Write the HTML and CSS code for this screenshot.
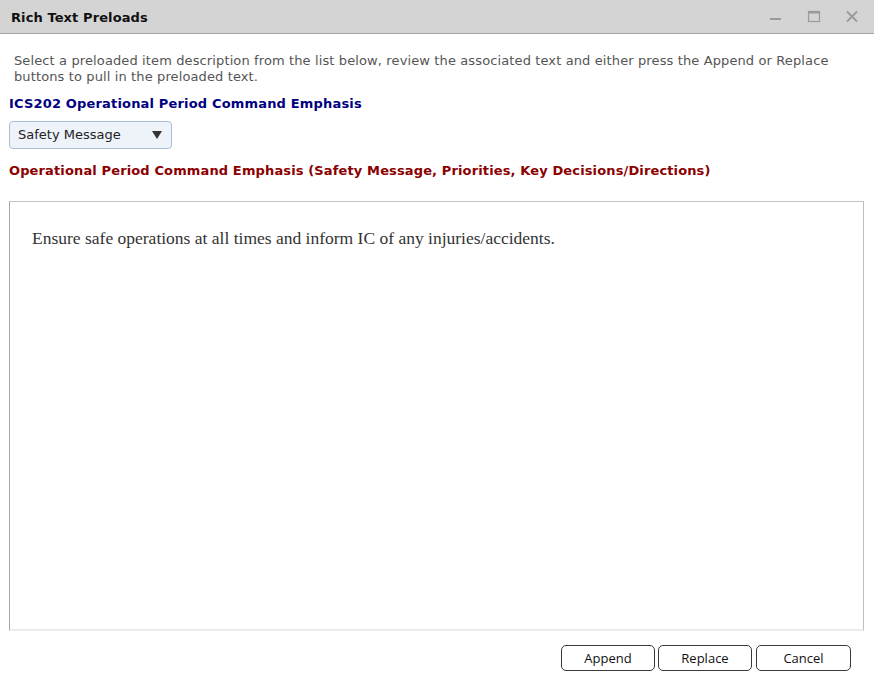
FILE: index.html
```html
<!DOCTYPE html>
<html>
<head>
<meta charset="utf-8">
<link rel="stylesheet" href="styles.css">
</head>
<body>
<div class="dialog">
  <div class="titlebar">
    <div class="title">Rich Text Preloads</div>
    <div class="controls">
      <svg class="ctl" width="14" height="14" viewBox="0 0 14 14"><rect x="1" y="8" width="11" height="2" fill="#9a9a9a"/></svg>
      <svg class="ctl" width="14" height="14" viewBox="0 0 14 14"><rect x="1.5" y="1.5" width="11" height="10" fill="none" stroke="#9a9a9a" stroke-width="1.2"/><rect x="1" y="1" width="12" height="2.5" fill="#9a9a9a"/></svg>
      <svg class="ctl" width="14" height="14" viewBox="0 0 14 14"><path d="M2 1.5 L12 11.5 M12 1.5 L2 11.5" stroke="#9a9a9a" stroke-width="1.9"/></svg>
    </div>
  </div>
  <div class="content">
    <p class="intro">Select a preloaded item description from the list below, review the associated text and either press the Append or Replace buttons to pull in the preloaded text.</p>
    <div class="section-title">ICS202 Operational Period Command Emphasis</div>
    <div class="select">
      <span>Safety Message</span>
      <svg width="10" height="8" viewBox="0 0 10 8"><path d="M0 0 L10 0 L5 8 Z" fill="#333"/></svg>
    </div>
    <div class="field-title">Operational Period Command Emphasis (Safety Message, Priorities, Key Decisions/Directions)</div>
    <div class="editor">
      <p>Ensure safe operations at all times and inform IC of any injuries/accidents.</p>
    </div>
  </div>
  <div class="footer">
    <button class="btn">Append</button>
    <button class="btn">Replace</button>
    <button class="btn btn-wide">Cancel</button>
  </div>
</div>
</body>
</html>
```

FILE: styles.css
```css
html, body {
  margin: 0;
  padding: 0;
  background: #fff;
}
body {
  font-family: "DejaVu Sans", Verdana, sans-serif;
  font-size: 13px;
}
.dialog {
  width: 874px;
  height: 677px;
  display: flex;
  flex-direction: column;
}
.titlebar {
  height: 33px;
  background: #d4d4d4;
  border-bottom: 1px solid #a3a3a8;
  display: flex;
  align-items: center;
  justify-content: space-between;
  flex-shrink: 0;
}
.title {
  padding-left: 11px;
  font-weight: bold;
  font-size: 13px;
  letter-spacing: 0.1px;
  color: #111;
  padding-top: 1px;
}
.controls {
  display: flex;
  gap: 24px;
  padding-right: 15px;
  padding-top: 1px;
}
.ctl {
  display: block;
}
.content {
  flex: 1;
  display: flex;
  flex-direction: column;
  padding: 0 10px 0 9px;
}
.intro {
  margin: 19px 0 0 5px;
  line-height: 16px;
  color: #555;
  font-size: 13px;
  letter-spacing: 0.12px;
}
.section-title {
  margin-top: 11px;
  line-height: 16px;
  font-weight: bold;
  color: #000080;
  letter-spacing: 0.17px;
}
.select {
  margin-top: 9px;
  border: 1px solid #a9bfd9;
  border-radius: 4px;
  background: #eef3fa;
  display: flex;
  align-items: center;
  justify-content: space-between;
  padding: 0 9px 1px 8px;
  box-sizing: border-box;
  width: 163px;
  height: 28px;
  color: #222;
}
.select svg {
  display: block;
}
.field-title {
  margin-top: 14px;
  line-height: 16px;
  font-weight: bold;
  color: #8b0000;
  letter-spacing: 0.13px;
}
.editor {
  margin-top: 22px;
  flex: 1;
  border: 1px solid #c4c4c4;
  border-left-color: #a8a8a8;
  border-right-color: #bdbdbd;
  border-bottom: 2px solid #ececec;
  padding: 25px 22px;
}
.editor p {
  margin: 0;
  font-family: "Liberation Serif", "Times New Roman", serif;
  font-size: 17.5px;
  line-height: 22px;
  color: #333;
}
.footer {
  height: 46px;
  flex-shrink: 0;
  display: flex;
  justify-content: flex-end;
  align-items: flex-start;
  padding: 14px 23px 0 0;
  box-sizing: border-box;
}
.btn {
  box-sizing: border-box;
  width: 94px;
  height: 26px;
  margin-left: 3px;
  border: 1px solid #3a3a3a;
  border-radius: 5px;
  background: #fff;
  font-family: "Open Sans", "Segoe UI", sans-serif;
  font-size: 13px;
  color: #111;
  padding: 0;
}
.btn-wide {
  width: 95px;
  margin-left: 4px;
}
```
